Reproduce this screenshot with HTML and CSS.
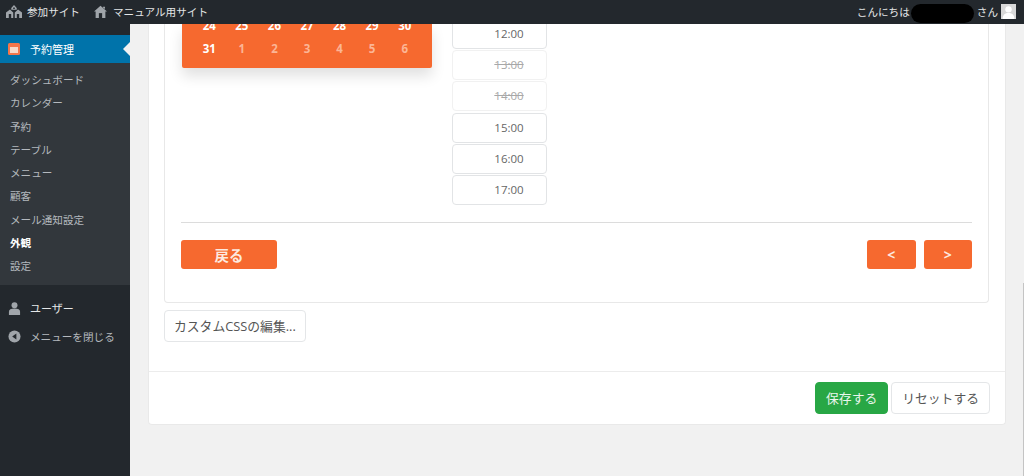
FILE: index.html
```html
<!DOCTYPE html>
<html lang="ja">
<head>
<meta charset="utf-8">
<title>外観</title>
<link rel="stylesheet" href="styles.css">
</head>
<body>
<header class="topbar">
  <div class="top-left">
    <span class="top-item">
      <svg class="top-icon" viewBox="0 0 20 16"><path d="M10 0l3.400 3.600v2.200H6.600V3.600zM5 5.500l4 3.800V16H0V9.300zM15 5.500l5 3.800V16h-9V9.300z" fill="#a0a5aa"/><path d="M3.500 11h3v5h-3zM13.500 11h3v5h-3zM9 3h2v2H9z" fill="#23282d"/></svg>
      参加サイト
    </span>
    <span class="top-item top-site">
      <svg class="top-icon home" viewBox="0 0 16 16"><path d="M8 1l8 7h-2v8H2V8H0zM11 2h2.500v3L11 3z" fill="#a0a5aa"/><path d="M6 10h4v6H6z" fill="#23282d"/></svg>
      マニュアル用サイト
    </span>
  </div>
  <div class="top-right">
    <span>こんにちは</span>
    <span class="redact"></span>
    <span class="san">さん</span>
    <span class="avatar"><svg viewBox="0 0 14 14"><circle cx="7" cy="5" r="3" fill="#fff"/><path d="M1.500 14c0-4 2.500-5.500 5.500-5.500s5.500 1.500 5.500 5.500z" fill="#fff"/></svg></span>
  </div>
</header>
<div class="shell">
  <aside class="sidebar">
    <div class="active-item">
      <svg class="cal-icon" viewBox="0 0 12 12"><rect width="12" height="12" rx="1.500" fill="#f4764a"/><rect x="2" y="4" width="8" height="6" fill="#f8d9c8"/></svg>
      <span>予約管理</span>
    </div>
    <ul class="submenu">
      <li>ダッシュボード</li>
      <li>カレンダー</li>
      <li>予約</li>
      <li>テーブル</li>
      <li>メニュー</li>
      <li>顧客</li>
      <li>メール通知設定</li>
      <li class="current">外観</li>
      <li>設定</li>
    </ul>
    <div class="side-row user-row">
      <svg class="side-icon" viewBox="0 0 14 14"><circle cx="7" cy="3.500" r="3.200" fill="#a0a5aa"/><path d="M1 14v-3.500C1 8 3 7 7 7s6 1 6 3.500V14z" fill="#a0a5aa"/></svg>
      <span>ユーザー</span>
    </div>
    <div class="side-row collapse-row">
      <svg class="side-icon" viewBox="0 0 14 14"><circle cx="7" cy="7" r="6.500" fill="#a0a5aa"/><path d="M9 3.700v6.600L4.500 7z" fill="#23282d"/></svg>
      <span>メニューを閉じる</span>
    </div>
  </aside>
  <main class="main">
    <div class="card">
      <div class="card-body">
        <section class="panel">
          <div class="picker">
            <div class="calendar">
              <div class="cal-grid">
                <span>24</span><span>25</span><span>26</span><span>27</span><span>28</span><span>29</span><span>30</span>
                <span>31</span><span class="muted">1</span><span class="muted">2</span><span class="muted">3</span><span class="muted">4</span><span class="muted">5</span><span class="muted">6</span>
              </div>
            </div>
            <div class="slots">
              <div class="slot">12:00</div>
              <div class="slot off">13:00</div>
              <div class="slot off">14:00</div>
              <div class="slot">15:00</div>
              <div class="slot">16:00</div>
              <div class="slot">17:00</div>
            </div>
          </div>
          <div class="nav-row">
            <button class="orange back">戻る</button>
            <div class="arrows">
              <button class="orange arrow">&lt;</button>
              <button class="orange arrow">&gt;</button>
            </div>
          </div>
        </section>
        <button class="btn css-btn">カスタムCSSの編集...</button>
      </div>
      <div class="card-foot">
        <button class="btn save">保存する</button>
        <button class="btn">リセットする</button>
      </div>
    </div>
    <div class="scroll-edge"></div>
  </main>
</div>
</body>
</html>
```
FILE: styles.css
```css
* { box-sizing: border-box; }
html, body { margin: 0; height: 100%; overflow: hidden; }
body {
  font-family: "Open Sans", "Noto Sans CJK JP", sans-serif;
  background: #f1f1f1;
  color: #444;
  display: flex;
  flex-direction: column;
}
ul { margin: 0; padding: 0; list-style: none; }
button { font-family: inherit; cursor: pointer; }

.topbar {
  height: 24px;
  flex: none;
  background: #23282d;
  color: #e4e6e7;
  font-size: 10.600px;
  display: flex;
  justify-content: space-between;
  align-items: center;
  padding: 0 8px 1px 6px;
  position: relative;
  z-index: 2;
}
.top-left, .top-right, .top-item { display: flex; align-items: center; }
.top-icon { width: 16px; height: 13px; margin-right: 5px; }
.top-icon.home { width: 13px; margin-right: 6px; }
.top-site { margin-left: 14px; }
.redact {
  width: 63px;
  height: 19px;
  margin: 3px 0 0 1px;
  background: #000;
  border-radius: 10px;
}
.san { margin-left: 3px; }
.avatar { width: 15px; height: 15px; background: #d8d8d8; margin-left: 3px; display: block; }
.avatar svg { display: block; width: 15px; height: 15px; }

.shell { flex: 1; display: flex; min-height: 0; }
.sidebar {
  width: 130px;
  flex: none;
  background: #23282d;
  padding-top: 11px;
  font-size: 10.600px;
  color: #b4b9be;
}
.active-item {
  height: 28px;
  background: #0073aa;
  color: #fff;
  font-size: 11px;
  display: flex;
  align-items: center;
  padding-left: 8px;
  gap: 10px;
  position: relative;
}
.active-item::after {
  content: "";
  position: absolute;
  right: 0;
  top: 7px;
  border: 7px solid transparent;
  border-right-color: #f1f1f1;
  border-left-width: 0;
}
.cal-icon { width: 12px; height: 12px; }
.submenu { background: #32373c; padding: 6px 0 7px; }
.submenu li { height: 23.250px; line-height: 23px; padding-left: 10px; }
.submenu .current { color: #fff; font-weight: 700; }
.side-row { display: flex; align-items: center; padding-left: 8px; gap: 9px; height: 28px; }
.user-row { margin-top: 9px; color: #e4e6e7; font-size: 11px; }
.side-icon { width: 13px; height: 13px; }

.main { flex: 1; min-width: 0; overflow: hidden; padding-left: 18px; padding-right: 18px; position: relative; }
.scroll-edge {
  position: absolute;
  right: 0;
  top: 259px;
  bottom: 0;
  width: 1px;
  background: #c4c4c4;
}
.card {
  background: #fff;
  border: 1px solid #e9e9e9;
  border-top: 0;
  border-radius: 0 0 4px 4px;
}
.card-body { padding: 0 16px 29px 15px; }
.panel {
  border: 1px solid #e8e8e8;
  border-top: 0;
  border-radius: 0 0 4px 4px;
  padding: 0 16px 33px;
}
.picker { display: flex; gap: 20px; padding: 0 0 17px 1px; border-bottom: 1px solid #dcdcdc; }
.calendar {
  width: 250px;
  height: 44px;
  background: #f6692f;
  border-radius: 0 0 2px 2px;
  box-shadow: 0 8px 14px rgba(0, 0, 0, .12);
  padding: 0 11px;
  overflow: hidden;
}
.cal-grid {
  margin-top: -10px;
  display: grid;
  grid-template-columns: repeat(7, 1fr);
  grid-auto-rows: 23px;
  color: #fff;
  font-size: 11.500px;
  font-weight: 700;
  text-align: center;
  line-height: 23px;
}
.cal-grid .muted { color: #fcb595; }
.slots { width: 95px; margin-top: -5px; display: flex; flex-direction: column; gap: 1.200px; }
.slot {
  height: 30px;
  padding-left: 19px;
  border: 1px solid #e2e4e6;
  border-radius: 4px;
  font-size: 11.500px;
  line-height: 28px;
  text-align: center;
  color: #666;
  background: #fff;
}
.slot.off { border-color: #f1f1f1; color: #a8a8a8; text-decoration: line-through; }
.nav-row { display: flex; justify-content: space-between; margin-top: 17px; }
.arrows { display: flex; gap: 8px; }
.orange {
  height: 29px;
  border: 0;
  border-radius: 3px;
  background: #f6692f;
  color: #fde9df;
  font-weight: 700;
  font-size: 14.500px;
  padding: 0;
}
.back { width: 96px; }
.arrow { width: 48.500px; font-size: 14px; }
.btn {
  height: 32px;
  padding: 0 10px;
  border: 1px solid #e4e6e8;
  border-radius: 4px;
  background: #fff;
  color: #555;
  font-size: 12.800px;
}
.css-btn { margin-top: 7px; padding: 0 9px; display: block; }
.card-foot {
  border-top: 1px solid #ececec;
  padding: 10px 15px 10px 16px;
  display: flex;
  justify-content: flex-end;
  gap: 3px;
}
.save { background: #28a745; border-color: #28a745; color: #e9f6ec; }
```
